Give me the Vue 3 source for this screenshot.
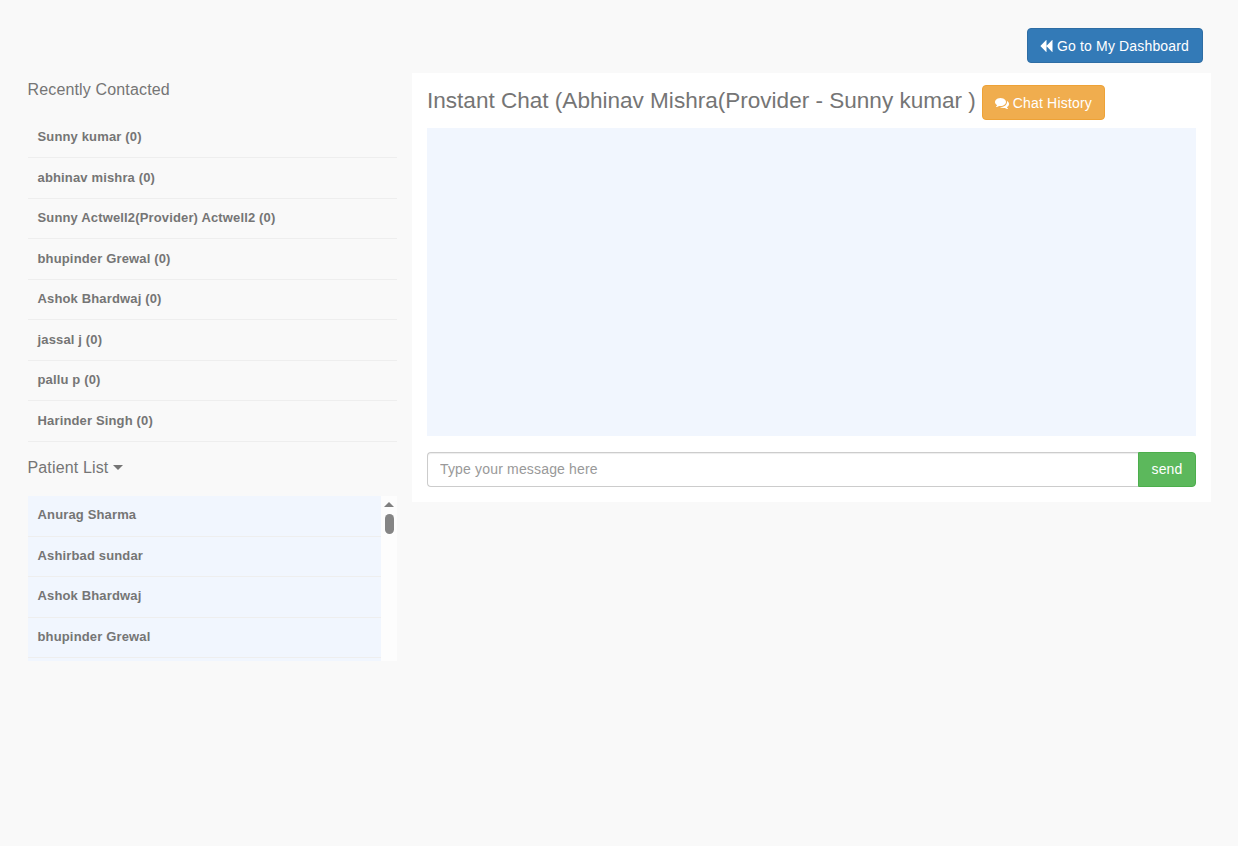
<script setup>
const recent = [
  'Sunny kumar (0)',
  'abhinav mishra (0)',
  'Sunny Actwell2(Provider) Actwell2 (0)',
  'bhupinder Grewal (0)',
  'Ashok Bhardwaj (0)',
  'jassal j (0)',
  'pallu p (0)',
  'Harinder Singh (0)'
]
const patients = ['Anurag Sharma', 'Ashirbad sundar', 'Ashok Bhardwaj', 'bhupinder Grewal']
</script>

<template>
  <div class="page">
    <div class="topbar">
      <button class="btn btn-blue">
        <svg class="ico" viewBox="0 0 1792 1792"><path fill="currentColor" d="M1683 141q19-19 32-13t13 32v1472q0 26-13 32t-32-13l-710-710q-9-9-13-19v710q0 26-13 32t-32-13l-710-710q-19-19-19-45t19-45l710-710q19-19 32-13t13 32v710q4-10 13-19z"/></svg>
        Go to My Dashboard
      </button>
    </div>
    <div class="main">
      <aside class="side">
        <h4 class="side-title recent-title">Recently Contacted</h4>
        <ul class="list">
          <li v-for="r in recent" :key="r" class="row">{{ r }}</li>
        </ul>
        <h4 class="side-title patient-title">Patient List <span class="caret"></span></h4>
        <div class="scrollbox">
          <ul class="list patients">
            <li v-for="p in patients" :key="p" class="row">{{ p }}</li>
          </ul>
          <div class="track">
            <span class="arrow"></span>
            <span class="thumb"></span>
          </div>
        </div>
      </aside>
      <section class="panel">
        <div class="head">
          <h3 class="title">Instant Chat (Abhinav Mishra(Provider - Sunny kumar )</h3>
          <button class="btn btn-orange">
            <svg class="ico" viewBox="0 0 1792 1792"><path fill="currentColor" d="M1408 768q0 139-94 257t-256.500 186.500-353.500 68.500q-86 0-176-16-124 88-278 128-36 9-86 16h-3q-11 0-20.500-8t-11.500-21q-1-3-1-6.500t.5-6.500 2-6l2.500-5 3.500-5.500 4-5 4.500-5 4-4.500q5-6 23-25t26-29.500 22.500-29 25-38.500 20.500-44q-124-72-195-177t-71-224q0-139 94-257t256.500-186.500 353.500-68.500 353.500 68.500 256.500 186.500 94 257zm384 256q0 120-71 224.500t-195 176.500q10 24 20.500 44t25 38.500 22.500 29 26 29.500 23 25q1 1 4 4.500t4.500 5 4 5 3.500 5.500l2.500 5 2 6 .5 6.500-1 6.500q-3 14-13 22t-22 7q-50-7-86-16-154-40-278-128-90 16-176 16-271 0-472-132 58 4 88 4 161 0 309-45t264-129q125-92 192-212t67-254q0-77-23-152 129 71 204 178t75 230z"/></svg>
            Chat History
          </button>
        </div>
        <div class="chat"></div>
        <div class="composer">
          <input class="input" type="text" placeholder="Type your message here" />
          <button class="btn btn-green">send</button>
        </div>
      </section>
    </div>
  </div>
</template>

<style scoped>
.page {
  box-sizing: border-box;
  min-height: 846px;
  background: #f9f9f9;
  padding: 28px 27px 0 27.5px;
  font-family: "Liberation Sans", Arial, sans-serif;
  font-size: 14px;
  color: #757575;
}
.topbar {
  display: flex;
  justify-content: flex-end;
  padding-right: 8px;
}
.btn {
  box-sizing: border-box;
  display: inline-flex;
  align-items: center;
  justify-content: center;
  height: 35px;
  padding: 0;
  border: 1px solid transparent;
  border-radius: 4px;
  font-family: inherit;
  font-size: 14px;
  letter-spacing: 0.15px;
  white-space: nowrap;
  color: #fff;
}
.ico {
  flex: none;
  width: 14px;
  height: 14px;
  margin-right: 4px;
}
.btn-blue {
  width: 176px;
  padding-right: 2px;
  background: #337ab7;
  border-color: #2e6da4;
}
.btn-orange {
  width: 123px;
  margin-left: 6px;
  letter-spacing: 0.2px;
  background: #f0ad4e;
  border-color: #eea236;
}
.btn-green {
  width: 58px;
  padding-bottom: 1px;
  background: #5cb85c;
  border-color: #4cae4c;
  border-radius: 0 4px 4px 0;
}
.main {
  display: flex;
  align-items: flex-start;
  gap: 15px;
  margin-top: 10px;
}
.side {
  width: 369.5px;
  flex: none;
}
.side-title {
  margin: 0;
  font-size: 16px;
  font-weight: 400;
  line-height: 18px;
  letter-spacing: 0.15px;
}
.recent-title {
  padding-top: 8px;
  padding-bottom: 18.5px;
}
.patient-title {
  padding-top: 17.5px;
  padding-bottom: 19px;
}
.caret {
  display: inline-block;
  width: 0;
  height: 0;
  vertical-align: 3px;
  border-left: 5px solid transparent;
  border-right: 5px solid transparent;
  border-top: 5px solid #757575;
}
.list {
  margin: 0;
  padding: 0;
  list-style: none;
}
.row {
  box-sizing: border-box;
  height: 40.5px;
  padding: 9.5px 10px 0;
  font-size: 13px;
  letter-spacing: 0.15px;
  line-height: 20px;
  font-weight: 700;
  border-bottom: 1px solid #eeeeee;
}
.scrollbox {
  display: flex;
  height: 165px;
  overflow: hidden;
}
.patients {
  flex: 1;
  min-width: 0;
  background: #f1f6fe;
}
.patients .row {
  padding-top: 9px;
}
.track {
  flex: none;
  width: 16px;
  background: #fdfdfd;
  display: flex;
  flex-direction: column;
  align-items: center;
  padding-top: 6px;
}
.arrow {
  width: 0;
  height: 0;
  border-left: 5px solid transparent;
  border-right: 5px solid transparent;
  border-bottom: 5px solid #7f7f7f;
}
.thumb {
  width: 9px;
  height: 20px;
  margin-top: 7px;
  border-radius: 5px;
  background: #858585;
}
.panel {
  box-sizing: border-box;
  width: 799px;
  flex: none;
  background: #fff;
  padding: 12px 15px 15px;
}
.head {
  display: flex;
  align-items: flex-start;
  height: 43px;
}
.title {
  margin: 1px 0 0;
  font-size: 22.56px;
  font-weight: 400;
  line-height: 30px;
  white-space: nowrap;
}
.chat {
  height: 308px;
  background: #f1f6fe;
}
.composer {
  display: flex;
  margin-top: 16px;
}
.input {
  box-sizing: border-box;
  flex: 1;
  min-width: 0;
  height: 35px;
  padding: 5px 12px 7px;
  border: 1px solid #ccc;
  border-right: 0;
  border-radius: 4px 0 0 4px;
  box-shadow: inset 0 1px 1px rgba(0, 0, 0, 0.075);
  font-family: inherit;
  font-size: 14px;
  letter-spacing: 0.17px;
  color: #555;
  outline: none;
}
.input::placeholder {
  color: #999;
}
</style>
